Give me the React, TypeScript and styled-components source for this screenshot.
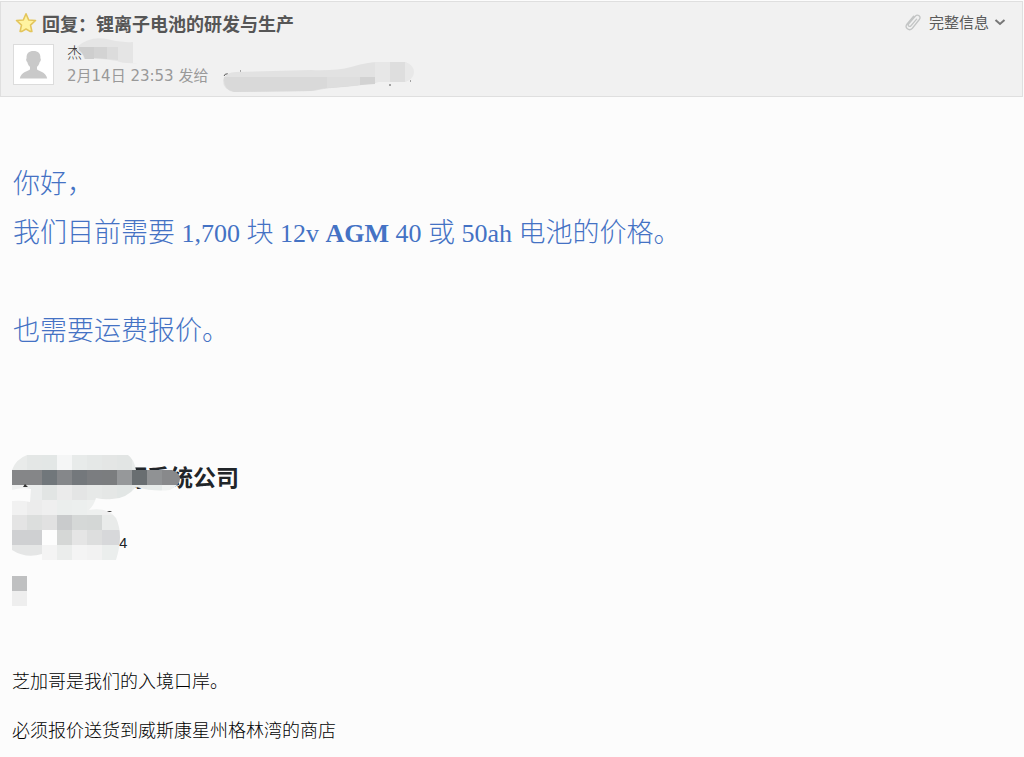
import React from 'react';
import styled, { createGlobalStyle } from 'styled-components';

const GlobalStyle = createGlobalStyle`
  * { box-sizing: border-box; }
  body {
    margin: 0;
    background: #fcfcfc;
    font-family: "Liberation Sans", "Noto Sans CJK SC", sans-serif;
  }
`;

const Page = styled.div`
  padding: 1px 1px 0 0;
`;

const Header = styled.header`
  display: flex;
  justify-content: space-between;
  align-items: flex-start;
  padding: 8px 16px 8px 12px;
  background: #f1f1f1;
  border: 1px solid #dfdfdf;
`;

const Summary = styled.div`
  display: flex;
  flex-direction: column;
`;

const TitleRow = styled.div`
  display: flex;
  align-items: center;
  gap: 5px;
`;

const StarButton = styled.button`
  display: flex;
  margin: 0 0 0 2px;
  padding: 0;
  border: 0;
  background: none;
`;

const Title = styled.h1`
  margin: 0;
  font: 700 18px/26px "Noto Sans CJK SC", sans-serif;
  color: #565656;
`;

const SenderRow = styled.div`
  display: flex;
  align-items: center;
  gap: 13px;
  margin-top: 4px;
`;

const Avatar = styled.div`
  display: flex;
  justify-content: center;
  align-items: flex-end;
  width: 41px;
  height: 41px;
  padding-bottom: 5px;
  background: #fff;
  border: 1px solid #dcdcdc;
`;

const SenderInfo = styled.div`
  position: relative;
  font: 400 15px/24px "DejaVu Sans", "Noto Sans CJK SC", sans-serif;
  color: #999;
`;

const Sender = styled.div`
  font-family: "Noto Sans CJK SC", sans-serif;
  font-weight: 300;
  color: #333;
`;

const Sent = styled.div`
  white-space: nowrap;
`;

const NameMask = styled.svg`
  position: absolute;
  left: 10px;
  top: -2px;
`;

const AddressMask = styled.svg`
  position: absolute;
  left: 154px;
  top: 20px;
`;

const Tools = styled.div`
  display: flex;
  align-items: center;
  gap: 7px;
`;

const DetailsButton = styled.button`
  display: flex;
  align-items: center;
  gap: 5px;
  padding: 0;
  border: 0;
  background: none;
  font: 400 15px/24px "Noto Sans CJK SC", sans-serif;
  color: #5a5a5a;
`;

const Message = styled.main`
  padding: 63px 12px 0;
`;

const Request = styled.section`
  padding-left: 1px;
  font: 300 27px/49px "Liberation Serif", "Noto Sans CJK SC", serif;
  color: #4472c4;
`;

const Line = styled.p<{ $before?: number }>`
  margin: ${(p) => p.$before ?? 0}px 0 0;
`;

const Latin = styled.span`
  font-size: 26px;
  line-height: 1;

  b {
    font-weight: 700;
  }
`;

const Signature = styled.section`
  position: relative;
  height: 152px;
  margin-top: 99px;
`;

const Company = styled.h2`
  margin: 0;
  padding: 3px 0 0 112px;
  font: 700 23px/36px "Noto Sans CJK SC", sans-serif;
  color: #212529;
`;

const Postcode = styled.div`
  padding: 37px 0 0 107px;
  font: 400 15px/24px "Liberation Sans", sans-serif;
  color: #212529;
`;

const SignatureMask = styled.svg`
  position: absolute;
  left: 0;
  top: 0;
`;

const Notes = styled.section`
  padding-top: 49px;
  font: 300 18px/49px "Noto Sans CJK SC", sans-serif;
  color: #000;
`;

const CELL = 15;

const signatureRows: string[][] = [
  ['#e9ebea', '#e4e7e6', '#e3e7e6', '#f5f6f6', '#e8ebea', '#e5e8e7', '#e4e6e5', '#e2e5e4', '#e8ebea', '#eee', '#eee', '#eee'],
  ['#858688', '#858688', '#71777b', '#85878a', '#74787c', '#7b7d80', '#7b7d7f', '#96989a', '#696e71', '#909294', '#88898b', '#88898b'],
  ['#f0f1f1', '#ebeded', '#e2e5e4', '#ebebeb', '#e4e5e5', '#e7e9e8', '#e5e7e6', '#e2e6e5', '#e6e9e8', '#e7ebea', '#f0f2f1', '#f0f2f1'],
  ['#f1f1f1', '#ececec', '#efefef', '#ebeeed', '#ecefee', '#eef0ef', '#efefef', '#eee', '#eee', '#eee', '#eee', '#eee'],
  ['#e4e4e4', '#dcdedd', '#e1e1e1', '#c9cbcc', '#d5d8d7', '#d4d7d6', '#e9ebea', '#e9ebea', '#eee', '#eee', '#eee', '#eee'],
  ['#cfd0d2', '#cfd0d2', '#fdfdfd', '#d5d7d6', '#e5e5e5', '#dddede', '#d7d8da', '#d7d8da', '#eee', '#eee', '#eee', '#eee'],
  ['#e5e6e6', '#e5e6e6', '#f4f4f4', '#ebedec', '#f4f4f4', '#f2f2f2', '#ebeeed', '#ebeeed', '#eee', '#eee', '#eee', '#eee'],
];

function Star() {
  return (
    <svg width="22" height="22" viewBox="0 0 22 22" aria-hidden="true">
      <path
        d="M11 1.8 13.7 8l6.800.5-5 4.600 1.400 6.300H15L11 17l-4 2.400H5.100l1.400-6.300-5-4.600L8.300 8Z"
        fill="#fff3a0"
        stroke="#e3c55c"
        strokeWidth="1.6"
        strokeLinejoin="round"
      />
    </svg>
  );
}

function Person() {
  return (
    <svg width="29" height="29" viewBox="0 0 29 29" aria-hidden="true">
      <path
        d="M14.5 1c-4.600 0-7.200 2.500-6.900 7.200-.8.500-.5 3 .7 3.800.5 2.300 1.300 3.700 2.700 4.800v2.500c-1 2-9 2.500-10.200 9.200h27.400C27 21.800 19 21.300 18 19.300v-2.500c1.400-1.100 2.200-2.500 2.700-4.800 1.200-.8 1.500-3.300.7-3.800C21.700 3.500 19.100 1 14.500 1Z"
        fill="#c9c9c9"
      />
    </svg>
  );
}

function Clip() {
  return (
    <svg width="18" height="20" viewBox="0 0 18 20" fill="none" stroke="#c3c5c5" strokeWidth="1.300" strokeLinecap="round" aria-hidden="true">
      <path d="M12.600 7.200 7 13.700c-1.600 1.700-3.800-.3-2.300-2L11.200 4.300c2.700-2.700 6.200.4 4.100 3.200L8.400 16.200c-3.300 3.500-8.300-.4-5.300-4.400L9.600 4.200" />
    </svg>
  );
}

function Chevron() {
  return (
    <svg width="12" height="8" viewBox="0 0 12 8" fill="none" stroke="#777" strokeWidth="2" aria-hidden="true">
      <path d="M1.500 2 6 6l4.500-4" />
    </svg>
  );
}

export default function App() {
  return (
    <>
      <GlobalStyle />
      <Page>
        <Header>
          <Summary>
            <TitleRow>
              <StarButton type="button" aria-label="星标">
                <Star />
              </StarButton>
              <Title>回复：锂离子电池的研发与生产</Title>
            </TitleRow>
            <SenderRow>
              <Avatar>
                <Person />
              </Avatar>
              <SenderInfo>
                <Sender>杰</Sender>
                <Sent>2月14日 23:53 发给</Sent>
                <NameMask width="64" height="28" aria-hidden="true">
                  <path d="M0 9Q12-2 30 1q13 4 26 3v21h5q-14 1-21-2-20-3-33-2Q6 15 0 12Z" fill="#e5e5e5" />
                  <path d="M2 9h15v12H8Q6 15 2 12Z" fill="#cecece" />
                  <path d="M17 9h13v12l-13-1Z" fill="#d3d3d3" />
                  <path d="M30 9h11v13l-11-1Z" fill="#dcdcdc" />
                </NameMask>
                <AddressMask width="194" height="36" aria-hidden="true">
                  <path d="M3 16q1-3 4-2M19 11h1M168 25h2M189 21h1" fill="none" stroke="#555" strokeWidth="1" />
                  <path d="M2 20Q5 12 15 12L90 10q25 1 40-3 17-5 28-5h24a10 10 0 0 1 0 20h-24q-20 4-35 5-20 1-30 4l-80 1Q2 30 2 20Z" fill="#e2e2e2" />
                  <path d="M3 17h152v5q-20 4-35 5-20 1-30 4l-77 1Q2 30 3 17Z" fill="#d9d9d9" />
                  <path d="M106 17h34v8l-34 3Z" fill="#dedede" />
                  <path d="M139 17h15v7l-15 1Z" fill="#d2d2d2" />
                  <path d="M154 2h15v20h-15Z" fill="#e7e7e7" />
                  <path d="M169 2h15v20h-15Z" fill="#dedede" />
                  <path d="M184 2q9 3 9 10t-9 10Z" fill="#e8e8e8" />
                </AddressMask>
              </SenderInfo>
            </SenderRow>
          </Summary>
          <Tools>
            <Clip />
            <DetailsButton type="button">
              完整信息
              <Chevron />
            </DetailsButton>
          </Tools>
        </Header>
        <Message>
          <Request>
            <Line>你好，</Line>
            <Line>
              我们目前需要<Latin> 1,700 </Latin>块
              <Latin>
                {' '}12v <b>AGM</b> 40{' '}
              </Latin>
              或<Latin> 50ah </Latin>电池的价格。
            </Line>
            <Line $before={49}>也需要运费报价。</Line>
          </Request>
          <Signature>
            <Company>源系统公司</Company>
            <Postcode>4</Postcode>
            <SignatureMask width="180" height="152" aria-hidden="true">
              <defs>
                <clipPath id="brush">
                  <path d="M0 15Q4 4 15 0H116Q122 4 124 15H160Q168 18 168 24T158 35Q142 37 124 32Q114 44 100 44Q92 45 84 43Q82 50 77 55Q96 52 104 63Q112 80 104 105H30V99Q14 104 0 95V46Q10 45 18 47L19 34Q10 32 0 35Z" />
                </clipPath>
              </defs>
              <g clipPath="url(#brush)" shapeRendering="crispEdges">
                {signatureRows.map((row, y) =>
                  row.map((color, x) => (
                    <rect key={`${x}-${y}`} x={x * CELL} y={y * CELL} width={CELL} height={CELL} fill={color} />
                  )),
                )}
              </g>
              <rect y="121" width="15" height="15" fill="#bfc0c1" />
              <rect y="136" width="15" height="15" fill="#eee" />
              <path d="M11 32l2-3 3 3ZM95 57q3-2 5 0Z" fill="#333" />
            </SignatureMask>
          </Signature>
          <Notes>
            <Line>芝加哥是我们的入境口岸。</Line>
            <Line>必须报价送货到威斯康星州格林湾的商店</Line>
          </Notes>
        </Message>
      </Page>
    </>
  );
}
